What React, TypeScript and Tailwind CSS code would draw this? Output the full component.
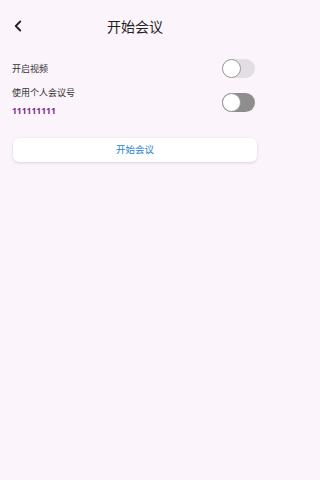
import { ChevronLeft } from "lucide-react";

function Toggle({ dark }: { dark?: boolean }) {
  return (
    <div
      className={`relative h-[19px] w-[33px] rounded-full ${dark ? "bg-[#8e8e8e]" : "bg-[#e2dee3]"}`}
    >
      <div className="absolute left-0 top-0 h-[19px] w-[19px] rounded-full border border-[#9a9a9a] bg-white" />
    </div>
  );
}

export default function App() {
  return (
    <div
      className="min-h-[480px] w-full bg-[#fcf4fb] text-[#333]"
      style={{ fontFamily: '"Noto Sans", "Noto Sans CJK SC", sans-serif' }}
    >
      <div className="w-[270px]">
        <header className="relative flex h-[52px] items-center justify-center">
          <ChevronLeft className="absolute left-[9px] top-[17px] h-[18px] w-[18px] text-[#222]" strokeWidth={2.4} />
          <h1 className="text-[14px] text-[#222]">开始会议</h1>
        </header>

        <div className="mt-[7px] flex h-[19px] items-center justify-between pl-3 pr-[15px]">
          <span className="text-[9px] leading-[12px]">开启视频</span>
          <Toggle />
        </div>

        <div className="mt-[9px] flex items-start justify-between pl-3 pr-[15px]">
          <div className="flex flex-col gap-[6px]">
            <span className="text-[9px] leading-[12px]">使用个人会议号</span>
            <span className="text-[8.5px] font-bold leading-[12px] text-[#7a2b8a]">111111111</span>
          </div>
          <div className="mt-[6px]">
            <Toggle dark />
          </div>
        </div>

        <button className="mx-[13px] mt-[21px] flex h-[24px] w-[244px] items-center justify-center rounded-[6px] bg-white text-[9.5px] text-[#1f86c6] shadow-[0_1px_3px_rgba(0,0,0,0.15)]">
          开始会议
        </button>
      </div>
    </div>
  );
}
